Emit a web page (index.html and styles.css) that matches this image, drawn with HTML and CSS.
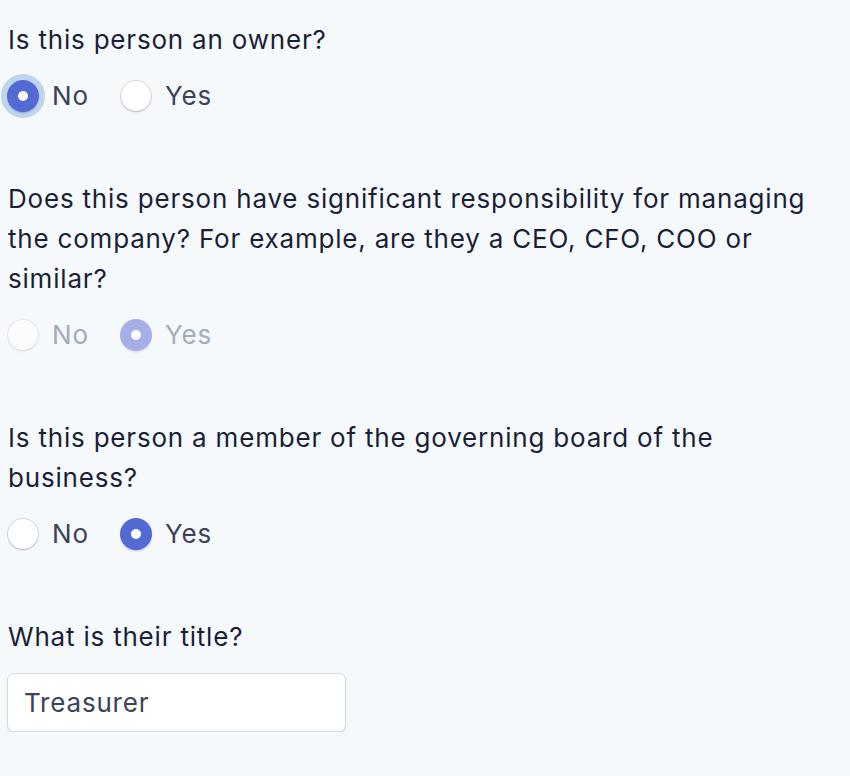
FILE: index.html
```html
<!DOCTYPE html>
<html lang="en">
<head>
<meta charset="utf-8">
<link rel="stylesheet" href="styles.css">
</head>
<body>
<form class="form">
  <div class="field" role="radiogroup">
    <p class="question">Is this person an owner?</p>
    <div class="options">
      <label class="option"><span class="radio checked focused"></span><span class="option-text">No</span></label>
      <label class="option"><span class="radio"></span><span class="option-text">Yes</span></label>
    </div>
  </div>

  <div class="field disabled" role="radiogroup">
    <p class="question">Does this person have significant responsibility for managing the company? For example, are they a CEO, CFO, COO or similar?</p>
    <div class="options">
      <label class="option"><span class="radio"></span><span class="option-text">No</span></label>
      <label class="option"><span class="radio checked"></span><span class="option-text">Yes</span></label>
    </div>
  </div>

  <div class="field" role="radiogroup">
    <p class="question">Is this person a member of the governing board of the business?</p>
    <div class="options">
      <label class="option"><span class="radio"></span><span class="option-text">No</span></label>
      <label class="option"><span class="radio checked"></span><span class="option-text">Yes</span></label>
    </div>
  </div>

  <div class="field">
    <label class="question" for="title">What is their title?</label>
    <input class="text-input" id="title" type="text" value="Treasurer">
  </div>
</form>
</body>
</html>
```

FILE: styles.css
```css
html, body {
  margin: 0;
  padding: 0;
  background: #f6f9fc;
}
body {
  font-family: Inter, "Noto Sans", sans-serif;
  font-size: 26px;
  letter-spacing: 0.8px;
  color: #1a1f36;
}
.form {
  display: flex;
  flex-direction: column;
  gap: 63px;
  padding: 20px 8px 0 8px;
  width: 820px;
}
.field {
  display: flex;
  flex-direction: column;
  align-items: flex-start;
  gap: 16px;
}
.question {
  display: block;
  margin: 0;
  line-height: 40px;
  color: #1a1f36;
}
.options {
  display: flex;
  align-items: center;
  height: 40px;
}
.option {
  display: flex;
  align-items: center;
  gap: 14px;
  width: 113px;
  color: #3c4257;
}
.option-text { line-height: 40px; }
.radio {
  width: 30px;
  height: 30px;
  border-radius: 50%;
  background: #ffffff;
  box-shadow: 0 0 0 1px rgba(60,66,87,0.18), 0 2px 2px rgba(60,66,87,0.12);
  position: relative;
  flex: none;
}
.radio.checked {
  background: #5469d4;
  box-shadow: 0 0 0 1px #5469d4, 0 2px 2px rgba(30,40,120,0.35);
}
.radio.checked::after {
  content: "";
  position: absolute;
  left: 10px;
  top: 10px;
  width: 10px;
  height: 10px;
  border-radius: 50%;
  background: #ffffff;
}
.radio.focused {
  box-shadow: 0 0 0 1px #5469d4, 0 2px 2px rgba(30,40,120,0.35), 0 0 0 7px rgba(122,171,220,0.45);
}
.disabled .option { color: #a3acb9; }
.disabled .radio { opacity: 0.5; }
.text-input {
  box-sizing: border-box;
  width: 339px;
  height: 59px;
  margin: 0 0 0 -1px;
  padding: 0 16px;
  font-family: Inter, "Noto Sans", sans-serif;
  font-size: 26px;
  letter-spacing: 0.8px;
  color: #3c4257;
  background: #ffffff;
  border: 1px solid #d3d7de;
  border-radius: 7px;
  box-shadow: 0 2px 2px rgba(60,66,87,0.10);
  outline: none;
}
```
